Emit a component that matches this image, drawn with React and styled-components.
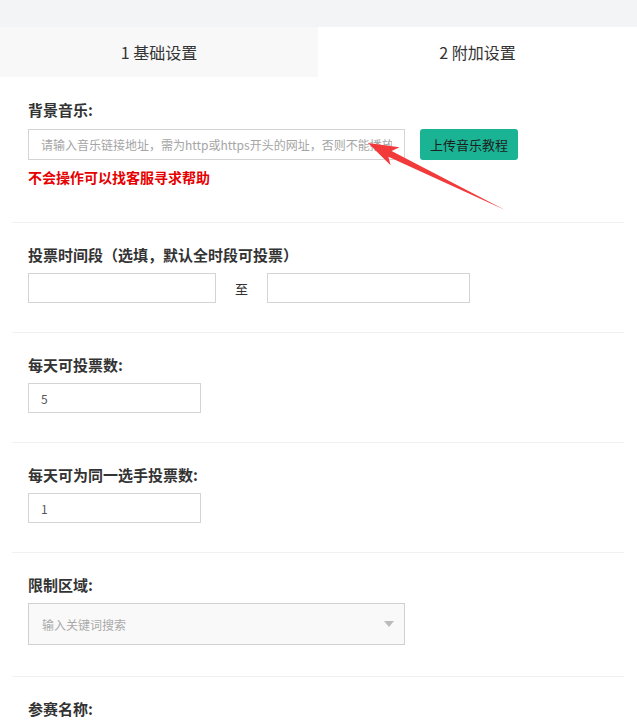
import React from "react";
import styled, { createGlobalStyle } from "styled-components";

const GlobalStyle = createGlobalStyle`
  body {
    margin: 0;
    background: #fff;
    font-family: "Noto Sans CJK SC", "Liberation Sans", sans-serif;
    color: #333;
  }
`;

const Page = styled.div`
  position: relative;
  width: 637px;
  height: 722px;
  overflow: hidden;
`;

const TopBar = styled.div`
  height: 27px;
  background: #f3f4f6;
`;

const Tabs = styled.div`
  display: flex;
  height: 50px;
`;

const Tab = styled.div`
  flex: ${p => (p.$active ? "1 1 0" : "0 0 318px")};
  display: flex;
  align-items: center;
  justify-content: center;
  font-size: 16px;
  color: #333;
  background: ${p => (p.$active ? "#fff" : "#f8f8f8")};
`;

const Form = styled.div`
  padding: 0 13px 0 12px;
`;

const Section = styled.div`
  padding: ${p => p.$top || 23}px 16px ${p => p.$bottom || 29}px;
  border-bottom: 1px solid #f0f0f0;
`;

const Label = styled.div`
  font-size: 15px;
  font-weight: bold;
  line-height: 18px;
  color: #333;
  margin-bottom: ${p => p.$gap || 9}px;
`;

const Row = styled.div`
  display: flex;
  align-items: center;
`;

const Input = styled.input`
  box-sizing: border-box;
  width: ${p => p.$w}px;
  height: ${p => p.$h || 31}px;
  border: 1px solid #d4d4d4;
  padding: 0 12px;
  font-size: 12px;
  color: #555;
  font-family: "Noto Sans CJK SC", "Liberation Sans", sans-serif;
  outline: none;
  &::placeholder {
    color: #a5a5a5;
  }
`;

const Button = styled.button`
  margin-left: 15px;
  width: 98px;
  height: 31px;
  border: none;
  border-radius: 3px;
  background: #1ab394;
  color: #1e1e1e;
  font-size: 13px;
  font-family: "Noto Sans CJK SC", "Liberation Sans", sans-serif;
`;

const Hint = styled.div`
  margin-top: 8px;
  font-size: 14px;
  line-height: 18px;
  font-weight: bold;
  color: #e60000;
`;

const To = styled.span`
  width: 51px;
  text-align: center;
  font-size: 13px;
  color: #333;
`;

const Select = styled.div`
  box-sizing: border-box;
  width: 377px;
  height: 42px;
  border: 1px solid #d0d0d0;
  background: #f9f9f9;
  display: flex;
  align-items: center;
  justify-content: space-between;
  padding: 0 10px 0 13px;
  font-size: 12px;
  color: #aaa;
`;

const Caret = styled.span`
  width: 0;
  height: 0;
  border-left: 5px solid transparent;
  border-right: 5px solid transparent;
  border-top: 6px solid #bbb;
`;

const Arrow = styled.svg`
  position: absolute;
  left: 0;
  top: 0;
  pointer-events: none;
`;

const App = () => (
  <Page>
    <GlobalStyle />
    <TopBar />
    <Tabs>
      <Tab>1 基础设置</Tab>
      <Tab $active>2 附加设置</Tab>
    </Tabs>
    <Form>
      <Section $top={24} $bottom={36}>
        <Label $gap={10}>背景音乐:</Label>
        <Row>
          <Input $w={377} placeholder="请输入音乐链接地址，需为http或https开头的网址，否则不能播放" />
          <Button>上传音乐教程</Button>
        </Row>
        <Hint>不会操作可以找客服寻求帮助</Hint>
      </Section>
      <Section>
        <Label>投票时间段（选填，默认全时段可投票）</Label>
        <Row>
          <Input $w={188} $h={30} />
          <To>至</To>
          <Input $w={203} $h={30} />
        </Row>
      </Section>
      <Section>
        <Label>每天可投票数:</Label>
        <Input $w={173} $h={30} defaultValue="5" />
      </Section>
      <Section>
        <Label>每天可为同一选手投票数:</Label>
        <Input $w={173} $h={30} defaultValue="1" />
      </Section>
      <Section $bottom={31}>
        <Label>限制区域:</Label>
        <Select>
          <span>输入关键词搜索</span>
          <Caret />
        </Select>
      </Section>
      <Section>
        <Label>参赛名称:</Label>
      </Section>
    </Form>
    <Arrow width="637" height="722">
      <polygon
        points="368,143 399.4,147.2 391.6,151 505,210 388.4,156.7 390.6,165.2"
        fill="#f23a3a"
      />
    </Arrow>
  </Page>
);

export default App;
